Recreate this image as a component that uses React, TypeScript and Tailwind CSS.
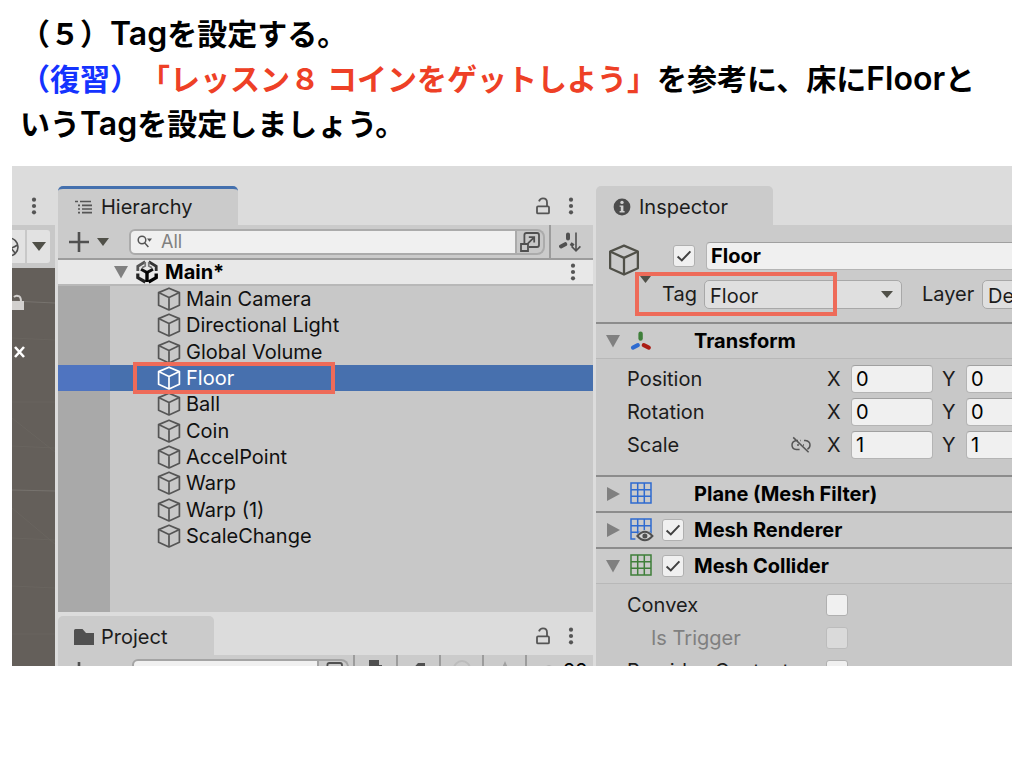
import type { ReactNode } from "react";

const HIERARCHY_ITEMS = [
  "Main Camera",
  "Directional Light",
  "Global Volume",
  "Floor",
  "Ball",
  "Coin",
  "AccelPoint",
  "Warp",
  "Warp (1)",
  "ScaleChange",
] as const;

const SELECTED_ITEM = "Floor";

const TRANSFORM_ROWS = [
  { label: "Position", x: "0", y: "0", linked: false },
  { label: "Rotation", x: "0", y: "0", linked: false },
  { label: "Scale", x: "1", y: "1", linked: true },
];

const FIELD = "rounded-[4px] border border-[#b4b4b4] border-t-[#a0a0a0] bg-[#f0f0f0] text-black outline-none";

function CubeIcon({ className }: { className: string }) {
  return (
    <svg viewBox="0 0 24 24" className={className} fill="none" stroke="currentColor" strokeWidth="1.7" strokeLinejoin="round" aria-hidden="true">
      <path d="M12 1.2 22.4 5.6V18.2L12 22.9 1.6 18.2V5.6Z" />
      <path d="M1.6 5.6 12 10.4 22.4 5.6M12 10.4V22.9" />
    </svg>
  );
}

function UnityIcon() {
  return (
    <svg viewBox="0 0 22 24" className="h-6 w-[22px] shrink-0" fill="none" aria-hidden="true">
      <path d="M9.2 1.8 1.8 6.2V11" stroke="#555" strokeWidth="2.8" />
      <path d="M12.8 1.8 20.2 6.2V11" stroke="#333" strokeWidth="2.8" />
      <path d="M9.2 2V6L6 7.8M12.8 2V6L16 7.8" stroke="#777" strokeWidth="1.8" />
      <path d="M1.8 13.4V17.6L9.4 22" stroke="#222" strokeWidth="3.2" />
      <path d="M20.2 13.4V17.6L12.6 22" stroke="#000" strokeWidth="3.4" />
      <path d="M5 9.2 11 12.6 17 9.2" stroke="#111" strokeWidth="3" />
      <path d="M11 11.4V22" stroke="#000" strokeWidth="3.4" />
    </svg>
  );
}

function KebabIcon() {
  return (
    <svg viewBox="0 0 6 18" className="h-[18px] w-[6px]" fill="#555" aria-hidden="true">
      <circle cx="3" cy="2.7" r="2.1" />
      <circle cx="3" cy="9" r="2.1" />
      <circle cx="3" cy="15.3" r="2.1" />
    </svg>
  );
}

function UnlockIcon() {
  return (
    <svg viewBox="0 0 14 18" className="h-[18px] w-[14px]" fill="none" stroke="#555" strokeWidth="1.8" aria-hidden="true">
      <rect x="1" y="9.4" width="12" height="7" rx="1" />
      <path d="M3 4.4C3.6 2.6 5 1.4 7 1.4c2.6 0 4 1.8 4 4v4" />
    </svg>
  );
}

function TriangleDown({ className }: { className: string }) {
  return (
    <svg viewBox="0 0 14 10" className={className} preserveAspectRatio="none" fill="currentColor" aria-hidden="true">
      <path d="M0 0H14L7 10Z" />
    </svg>
  );
}

function Foldout({ open }: { open: boolean }) {
  return (
    <svg viewBox="0 0 16 14" className="h-[14px] w-4 shrink-0" fill="#808080" aria-hidden="true">
      {open ? <path d="M1 1H15L8 13.5Z" /> : <path d="M2 0 15 7 2 14Z" />}
    </svg>
  );
}

function ListTreeIcon() {
  return (
    <svg viewBox="0 0 18 14" className="h-[14px] w-[18px]" stroke="#555" strokeWidth="1.7" aria-hidden="true">
      <path d="M0 1.5H3M5 1.5H16M3 5.4H5M7 5.4H17M3 9H5M7 9H17M3 12.6H5M7 12.6H17" />
    </svg>
  );
}

function FolderIcon() {
  return (
    <svg viewBox="0 0 20 16" className="h-4 w-5" fill="#505050" aria-hidden="true">
      <path d="M0 1.5Q0 0 1.5 0H8.5L12 4H20V16H0Z" />
    </svg>
  );
}

function InfoIcon() {
  return (
    <svg viewBox="0 0 18 18" className="h-[18px] w-[18px]" aria-hidden="true">
      <circle cx="9" cy="9" r="8.4" fill="#4c4c4c" />
      <circle cx="9" cy="4.4" r="1.7" fill="#d0d0d0" />
      <path d="M6.6 7.4H10.4V13H11.6V14.4H6.6V13H7.8V8.8H6.6Z" fill="#d0d0d0" />
    </svg>
  );
}

function SearchIcon() {
  return (
    <svg viewBox="0 0 16 14" className="h-[14px] w-4 shrink-0" fill="none" stroke="#555" strokeWidth="1.5" aria-hidden="true">
      <circle cx="5" cy="5" r="3.8" />
      <path d="M7.6 7.8 11.4 12" />
      <path d="M10 3.6H15L12.5 6.8Z" fill="#555" stroke="none" />
    </svg>
  );
}

function PopOutIcon() {
  return (
    <svg viewBox="0 0 20 20" className="h-5 w-5" fill="none" stroke="#505050" strokeWidth="1.8" aria-hidden="true">
      <path d="M4.4 11V3Q4.4 1 6.4 1H17Q19 1 19 3V13Q19 15 17 15H9" />
      <path d="M1 12H8V19H1Z" />
      <path d="M8 11.4 13.8 5.6M8.8 5.2H14.2V10.6" />
    </svg>
  );
}

function AxisSortIcon() {
  return (
    <svg viewBox="0 0 22 20" className="h-5 w-[22px]" fill="none" stroke="#505050" aria-hidden="true">
      <path d="M9 2.4V6.4M2 14.4 6.2 12.2" strokeWidth="4" strokeLinecap="round" />
      <path d="M11.6 11.6 14.6 13.6" strokeWidth="3.4" />
      <path d="M17 .6V18M12.6 14.4 17 18.8 21.4 14.4" strokeWidth="1.6" />
    </svg>
  );
}

function TransformIcon() {
  return (
    <svg viewBox="0 0 22 20" className="h-5 w-[22px] shrink-0" strokeLinecap="round" aria-hidden="true">
      <path d="M10.6 2.8V7.6" stroke="#3f7f3a" strokeWidth="4.4" />
      <path d="M3 16.6 7.8 14.2" stroke="#2f6bd0" strokeWidth="4.2" />
      <path d="M13.8 14.2 18.8 16.6" stroke="#ab1c14" strokeWidth="4.2" />
    </svg>
  );
}

function MeshIcon({ className, eye = false }: { className: string; eye?: boolean }) {
  return (
    <svg viewBox="0 0 24 24" className={className} fill="none" aria-hidden="true">
      <path d="M1 1H21V21H1ZM1 7.7H21M1 14.3H21M7.7 1V21M14.3 1V21" stroke="currentColor" strokeWidth="1.5" />
      {eye && (
        <>
          <path d="M5.4 18Q14.6 6 24 18V24H5.4Z" fill="#cbcbcb" />
          <path d="M7.4 18Q14.8 9.6 22.4 18Q14.8 26.4 7.4 18Z" fill="#d4d4d4" stroke="#505050" strokeWidth="2" />
          <circle cx="14.9" cy="18" r="2.5" fill="#505050" />
        </>
      )}
    </svg>
  );
}

function UnlinkIcon() {
  return (
    <svg viewBox="0 0 20 18" className="h-[18px] w-5" fill="none" stroke="#555" strokeWidth="1.5" aria-hidden="true">
      <path d="M2.2 1.4 17.6 16.2M7 4.4H5.4Q1 5.2 1 9Q1 13 5.4 13.6H8.6M9.4 4.4H10M13 4.4H14.4Q19 5 19 9Q19 12 16.4 13.2M6 9H8M12 9H13" />
    </svg>
  );
}

function IconButton({ label, children }: { label: string; children: ReactNode }) {
  return (
    <button type="button" aria-label={label} className="flex items-center justify-center">
      {children}
    </button>
  );
}

function Checkbox({ label, checked = false, disabled = false }: { label: string; checked?: boolean; disabled?: boolean }) {
  return (
    <span className="relative flex h-[22px] w-[22px] shrink-0">
      <input
        type="checkbox"
        aria-label={label}
        defaultChecked={checked}
        disabled={disabled}
        className="peer h-full w-full appearance-none rounded-[3px] border border-[#b0b0b0] bg-[#f0f0f0] disabled:border-[#bcbcbc] disabled:bg-[#dadada]"
      />
      <svg viewBox="0 0 22 22" className="pointer-events-none absolute inset-0 hidden peer-checked:block" fill="none" stroke="#404040" strokeWidth="2" aria-hidden="true">
        <path d="M4.6 11.6 8.8 15.4 17.4 6.4" />
      </svg>
    </span>
  );
}

function ComponentHeader({ title, icon, open = false, toggle = false }: { title: string; icon: ReactNode; open?: boolean; toggle?: boolean }) {
  return (
    <div className="flex h-9 shrink-0 items-center border-t-2 border-[#8c8c8c] bg-[#cbcbcb] pl-[9px]">
      <button type="button" aria-label={`Toggle ${title}`} className="flex">
        <Foldout open={open} />
      </button>
      <span className="ml-[9px] flex w-8 items-center">{icon}</span>
      <span className="flex w-8">{toggle && <Checkbox label={`${title} enabled`} checked />}</span>
      <h3 className="whitespace-nowrap text-[20px] font-bold text-black">{title}</h3>
    </div>
  );
}

function ScenePanel() {
  return (
    <section aria-label="Scene" className="flex flex-col overflow-hidden">
      <div className="flex h-[59px] shrink-0 items-end justify-center pb-[10px]">
        <IconButton label="Scene menu">
          <KebabIcon />
        </IconButton>
      </div>
      <div className="flex h-[43px] shrink-0 items-center gap-[2px] bg-[#c8c8c8] pr-[5px]">
        <button type="button" aria-label="Gizmos" className="flex h-[33px] w-[13px] items-center justify-end overflow-hidden bg-[#e2e2e2] pr-[6px]">
          <svg viewBox="0 0 20 20" className="h-5 w-5 shrink-0" fill="none" stroke="#505050" strokeWidth="1.6" aria-hidden="true">
            <circle cx="10" cy="10" r="9" />
            <path d="M1.5 9Q10 14 18.5 8M12 11 16 16" />
          </svg>
        </button>
        <button type="button" aria-label="Gizmo options" className="flex h-[33px] flex-1 items-center justify-center rounded-r-[3px] bg-[#e2e2e2] text-[#505048]">
          <TriangleDown className="h-[9px] w-[14px]" />
        </button>
      </div>
      <div className="flex-1 bg-[#645f5a]">
        <svg viewBox="0 0 43 398" className="h-[398px] w-full" preserveAspectRatio="none" aria-hidden="true">
          <path d="M0 33 43 35M0 222 43 223" stroke="#77736e" />
          <path d="M0 70 43 72M0 134H43M0 178 43 180M0 270 43 272M0 318 43 320M0 366H43M0 150 43 184M0 240 43 276" stroke="#6b6762" strokeWidth=".7" />
          <path d="M0 33H12V42H0Z" fill="#d2d0ce" />
          <path d="M2 29Q4 27 6 28Q9 28 9 34" stroke="#d2d0ce" strokeWidth="2" fill="none" />
          <path d="M3 79 12 89M12 79 3 89" stroke="#fff" strokeWidth="2.6" />
        </svg>
      </div>
    </section>
  );
}

function HierarchyPanel() {
  return (
    <section aria-label="Hierarchy" className="flex h-[446px] shrink-0 flex-col">
      <div className="flex h-[59px] shrink-0 items-end justify-between">
        <h2 className="flex h-[39px] w-[180px] items-center gap-2 rounded-t-[5px] border-t-[3px] border-[#4470ae] bg-[#cbcbcb] pl-[17px] text-[20px] text-[#1c1c1c]">
          <ListTreeIcon />
          Hierarchy
        </h2>
        <div className="flex gap-[18px] pr-[19px] pb-[10px]">
          <IconButton label="Lock hierarchy">
            <UnlockIcon />
          </IconButton>
          <IconButton label="Hierarchy menu">
            <KebabIcon />
          </IconButton>
        </div>
      </div>
      <div className="flex h-[35px] shrink-0 items-center border-b-2 border-[#9c9c9c] bg-[#cbcbcb] pl-[11px]">
        <button type="button" aria-label="Create" className="mr-5 flex items-center gap-2 text-[#505048]">
          <svg viewBox="0 0 20 20" className="h-5 w-5" stroke="#505050" strokeWidth="2.6" aria-hidden="true">
            <path d="M10 0V20M0 10H20" />
          </svg>
          <TriangleDown className="h-2 w-3" />
        </button>
        <label className="flex h-[26px] min-w-0 flex-1 items-center gap-2 rounded-l-[6px] border-2 border-[#ababab] bg-[#f0f0f0] pl-[6px]">
          <SearchIcon />
          <input aria-label="Search hierarchy" placeholder="All" className="min-w-0 flex-1 bg-transparent text-[18px] text-black outline-none placeholder:text-[#808080]" />
        </label>
        <button type="button" aria-label="Open search window" className="flex h-[26px] w-7 items-center justify-center rounded-r-[8px] border-y-2 border-r-2 border-[#ababab] bg-[#c8c8c8]">
          <PopOutIcon />
        </button>
        <button type="button" aria-label="Sort" className="ml-1 flex h-full w-[44px] items-center justify-center border-l-2 border-[#9c9c9c] pr-1">
          <AxisSortIcon />
        </button>
      </div>
      <div className="flex h-[26px] shrink-0 items-center border-b-2 border-[#b8b8b8] bg-[#e8e8e8] pr-[17px] pl-[55px]">
        <Foldout open />
        <span className="ml-[7px] flex">
          <UnityIcon />
        </span>
        <span className="ml-[7px] flex-1 text-[20px] font-bold text-black">Main*</span>
        <IconButton label="Scene options">
          <KebabIcon />
        </IconButton>
      </div>
      <div className="flex-1 border-l-[52px] border-[#a9a9a9] bg-[#c8c8c8]">
        <ul className="-ml-[52px] flex h-[263px] flex-col">
          {HIERARCHY_ITEMS.map((name) => {
            const selected = name === SELECTED_ITEM;
            return (
              <li key={name} className="relative min-h-0 flex-1">
                <button
                  type="button"
                  className={
                    selected
                      ? "flex h-full w-full items-center gap-[5px] border-l-[52px] border-[#4f74c0] bg-[#4770ae] pl-[47px] text-[20px] text-white"
                      : "flex h-full w-full items-center gap-[5px] pl-[99px] text-[20px] text-[#101010]"
                  }
                >
                  <CubeIcon className={selected ? "h-6 w-6 shrink-0" : "h-6 w-6 shrink-0 text-[#555]"} />
                  {name}
                </button>
                {selected && <span className="pointer-events-none absolute -inset-y-[3px] left-[75px] z-10 w-[202px] border-4 border-[#ee6b59]" />}
              </li>
            );
          })}
        </ul>
      </div>
    </section>
  );
}

function ProjectPanel() {
  return (
    <section aria-label="Project" className="flex flex-col">
      <div className="flex h-[43px] shrink-0 items-end justify-between">
        <h2 className="flex h-[39px] w-[156px] items-center gap-[7px] rounded-t-[5px] bg-[#cbcbcb] pt-[3px] pl-4 text-[20px] text-[#1c1c1c]">
          <FolderIcon />
          Project
        </h2>
        <div className="flex gap-[18px] pr-[19px] pb-[10px]">
          <IconButton label="Lock project">
            <UnlockIcon />
          </IconButton>
          <IconButton label="Project menu">
            <KebabIcon />
          </IconButton>
        </div>
      </div>
      <div className="flex h-[35px] shrink-0 items-start bg-[#cbcbcb] pl-[11px]">
        <button type="button" aria-label="Add asset" className="mt-[7px] mr-[43px]">
          <svg viewBox="0 0 20 20" className="h-5 w-5" stroke="#505050" strokeWidth="2.6" aria-hidden="true">
            <path d="M10 0V20M0 10H20" />
          </svg>
        </button>
        <input aria-label="Search project" className="mt-1 h-[26px] min-w-0 flex-1 rounded-l-[6px] border-2 border-[#a4a4a4] bg-[#f0f0f0] outline-none" />
        <button type="button" aria-label="Open project search" className="mt-1 flex h-[26px] w-[30px] items-center justify-center rounded-r-[8px] border-y-2 border-r-2 border-[#a4a4a4]">
          <PopOutIcon />
        </button>
        <div className="ml-1 flex h-full">
          <button type="button" aria-label="Filter by type" className="flex w-[43px] justify-center border-l-2 border-[#9c9c9c] pt-[5px]">
            <svg viewBox="0 0 16 16" className="h-4 w-4" fill="#505050" aria-hidden="true">
              <path d="M1 0H11V5H14V16H1Z" />
            </svg>
          </button>
          <button type="button" aria-label="Filter by label" className="flex w-[43px] justify-center border-l-2 border-[#9c9c9c] pt-2">
            <svg viewBox="0 0 16 16" className="h-4 w-4" fill="#505050" aria-hidden="true">
              <path d="M7 0H14V7L7 15 0 8Z" />
            </svg>
          </button>
          <button type="button" aria-label="Errors" className="flex w-[43px] justify-center border-l-2 border-[#9c9c9c] pt-[5px]">
            <svg viewBox="0 0 18 18" className="h-[18px] w-[18px]" fill="none" stroke="#bcbcbc" strokeWidth="2" aria-hidden="true">
              <circle cx="9" cy="9" r="8" />
            </svg>
          </button>
          <button type="button" aria-label="Favorites" className="flex w-[43px] justify-center border-l-2 border-[#9c9c9c] pt-[6px]">
            <svg viewBox="0 0 18 18" className="h-[18px] w-[18px]" fill="#a0a0a0" aria-hidden="true">
              <path d="M9 0 12 7H18L13 11 15 18 9 14 3 18 5 11 0 7H6Z" />
            </svg>
          </button>
          <button type="button" className="flex w-[68px] items-start gap-1 border-l-2 border-[#9c9c9c] pt-[6px] pl-3 text-[20px] leading-5 text-black">
            <svg viewBox="0 0 20 14" className="mt-1 h-[14px] w-5" fill="none" stroke="#999" strokeWidth="2" aria-hidden="true">
              <path d="M1 7Q10-4 19 7Q10 18 1 7Z" />
            </svg>
            22
          </button>
        </div>
      </div>
    </section>
  );
}

function InspectorPanel() {
  return (
    <section aria-label="Inspector" className="flex flex-col overflow-hidden text-[20px] text-[#1c1c1c]">
      <div className="flex h-[59px] shrink-0 items-end">
        <h2 className="flex h-[39px] w-[177px] items-center gap-2 rounded-t-[5px] bg-[#cbcbcb] pt-[3px] pl-[17px]">
          <InfoIcon />
          Inspector
        </h2>
      </div>

      <div className="flex h-[97px] shrink-0 bg-[#cbcbcb] pt-[17px] pl-3">
        <button type="button" aria-label="Select icon" className="mr-[-2px] flex h-[41px] w-[43px] shrink-0 items-end text-[#505048]">
          <CubeIcon className="h-[36px] w-[33px] self-start" />
          <TriangleDown className="h-[7px] w-[11px] shrink-0" />
        </button>
        <div className="flex flex-col gap-[10px]">
          <div className="flex h-7 items-center gap-[11px] pl-6">
            <Checkbox label="Active" checked />
            <input aria-label="Object name" defaultValue="Floor" className={`h-7 w-[420px] px-1 text-[20px] font-bold ${FIELD}`} />
          </div>
          <div className="relative flex h-7 items-center">
            <label htmlFor="tag" className="w-[55px] shrink-0 pl-[13px]">
              Tag
            </label>
            <span className="relative flex">
              <select id="tag" className="h-[29px] w-[198px] appearance-none rounded-[5px] border border-[#a8a8a8] bg-[#dfdfdf] px-[5px]">
                <option>Floor</option>
              </select>
              <TriangleDown className="pointer-events-none absolute top-[11px] right-[9px] h-[7px] w-3 text-[#505048]" />
            </span>
            <label htmlFor="layer" className="w-[80px] shrink-0 pl-5">
              Layer
            </label>
            <select id="layer" className="h-[29px] w-[198px] shrink-0 appearance-none rounded-[5px] border border-[#a8a8a8] bg-[#dfdfdf] px-[5px]">
              <option>Default</option>
            </select>
            <span className="pointer-events-none absolute -inset-y-2 -left-[14px] w-[202px] border-4 border-[#ee6b59]" />
          </div>
        </div>
      </div>

      <ComponentHeader title="Transform" open icon={<TransformIcon />} />
      <div className="flex shrink-0 flex-col gap-[5px] border-t border-[#b8b8b8] bg-[#c8c8c8] pt-[6px] pb-4 pl-[31px]">
        {TRANSFORM_ROWS.map((row) => (
          <div key={row.label} className="flex h-7 items-center">
            <span className="flex w-[200px] shrink-0 items-center justify-between pr-4">
              {row.label}
              {row.linked && <UnlinkIcon />}
            </span>
            <label className="flex items-center">
              <span className="w-6">X</span>
              <input aria-label={`${row.label} X`} defaultValue={row.x} className={`h-7 w-[82px] px-1 ${FIELD}`} />
            </label>
            <label className="ml-[9px] flex items-center">
              <span className="w-6">Y</span>
              <input aria-label={`${row.label} Y`} defaultValue={row.y} className={`h-7 w-[82px] px-1 ${FIELD}`} />
            </label>
          </div>
        ))}
      </div>

      <ComponentHeader title="Plane (Mesh Filter)" icon={<MeshIcon className="h-6 w-6 text-[#2f6bd0]" />} />
      <ComponentHeader title="Mesh Renderer" toggle icon={<MeshIcon eye className="h-6 w-6 text-[#2f6bd0]" />} />
      <ComponentHeader title="Mesh Collider" open toggle icon={<MeshIcon className="h-6 w-6 text-[#3f7f3a]" />} />
      <div className="flex shrink-0 flex-col gap-[11px] border-t border-[#b8b8b8] bg-[#c8c8c8] pt-[10px] pb-5 pl-[31px]">
        <div className="flex h-[22px] items-center">
          <span className="w-[199px]">Convex</span>
          <Checkbox label="Convex" />
        </div>
        <div className="flex h-[22px] items-center text-[#808080]">
          <span className="w-[199px] pl-6">Is Trigger</span>
          <Checkbox label="Is Trigger" disabled />
        </div>
        <div className="flex h-[22px] items-center">
          <span className="w-[199px] whitespace-nowrap">Provides Contacts</span>
          <Checkbox label="Provides Contacts" />
        </div>
      </div>
    </section>
  );
}

function Latin({ children }: { children: string }) {
  return <span className="text-[32px] leading-none font-semibold">{children}</span>;
}

export default function App() {
  return (
    <main className="min-h-screen bg-white font-['Inter','Noto_Sans_CJK_JP',sans-serif]">
      <h1 className="pt-3 pr-8 pl-5 text-[30px] leading-[45px] font-bold text-black [text-spacing-trim:space-all]">
        （５）<Latin>Tag</Latin>を設定する。
        <br />
        <span className="text-[#1433ff]">（復習）</span>
        <span className="text-[#ee4026]">「レッスン８ コインをゲットしよう」</span>
        を参考に、床に<Latin>Floor</Latin>と
        <br />
        いう<Latin>Tag</Latin>を設定しましょう。
      </h1>
      <div className="mx-3 mt-[19px] grid h-[500px] grid-cols-[43px_minmax(0,535fr)_minmax(0,416fr)] gap-[3px] overflow-hidden bg-[#dcdcdc]">
        <ScenePanel />
        <div className="flex h-[500px] flex-col overflow-hidden">
          <HierarchyPanel />
          <ProjectPanel />
        </div>
        <InspectorPanel />
      </div>
    </main>
  );
}
